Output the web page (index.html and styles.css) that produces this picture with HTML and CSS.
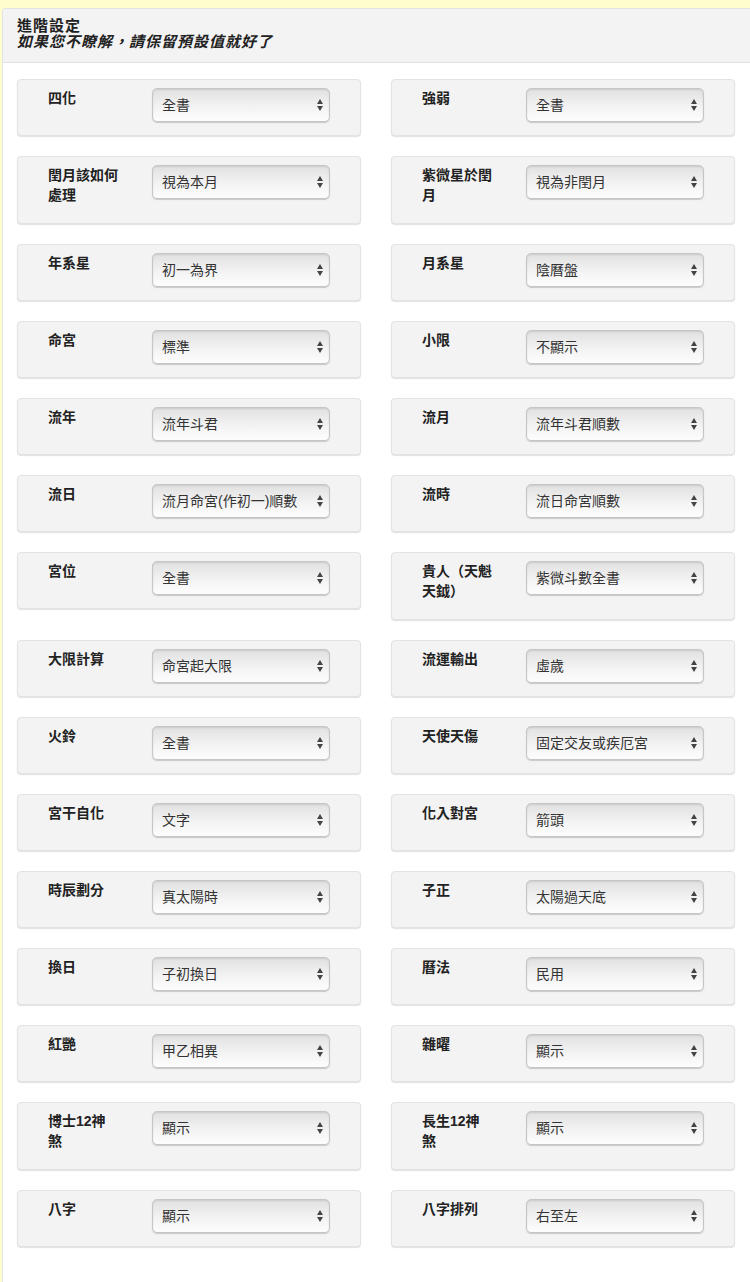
FILE: index.html
```html
<!DOCTYPE html>
<html lang="zh-Hant">
<head>
  <meta charset="UTF-8">
  <meta name="viewport" content="width=device-width, initial-scale=1.0">
  <title>進階設定</title>
  <link rel="stylesheet" href="styles.css">
</head>
<body>
  <div class="panel">
    <div class="panel-head">
      <h2>進階設定</h2>
      <p>如果您不瞭解，請保留預設值就好了</p>
    </div>
    <div class="panel-body">
      <div class="settings" id="settings"></div>
    </div>
  </div>

  <script>
    // label / current value pairs, filled two per row
    const options = [
      ['四化', '全書'], ['強弱', '全書'],
      ['閏月該如何處理', '視為本月'], ['紫微星於閏月', '視為非閏月'],
      ['年系星', '初一為界'], ['月系星', '陰曆盤'],
      ['命宮', '標準'], ['小限', '不顯示'],
      ['流年', '流年斗君'], ['流月', '流年斗君順數'],
      ['流日', '流月命宮(作初一)順數'], ['流時', '流日命宮順數'],
      ['宮位', '全書'], ['貴人（天魁天鉞）', '紫微斗數全書'],
      ['大限計算', '命宮起大限'], ['流運輸出', '虛歲'],
      ['火鈴', '全書'], ['天使天傷', '固定交友或疾厄宮'],
      ['宮干自化', '文字'], ['化入對宮', '箭頭'],
      ['時辰劃分', '真太陽時'], ['子正', '太陽過天底'],
      ['換日', '子初換日'], ['曆法', '民用'],
      ['紅艷', '甲乙相異'], ['雜曜', '顯示'],
      ['博士12神煞', '顯示'], ['長生12神煞', '顯示'],
      ['八字', '顯示'], ['八字排列', '右至左']
    ];

    const arrows = '<svg class="arrows" viewBox="0 0 6 12"><path d="M0 5L3 0L6 5Z"/><path d="M0 7L6 7L3 12Z"/></svg>';

    document.getElementById('settings').innerHTML = options.map(([label, value]) => `
      <div class="field">
        <label class="field-label">${label}</label>
        <span class="picker">
          <select><option>${value}</option></select>
          ${arrows}
        </span>
      </div>`).join('');
  </script>
</body>
</html>
```

FILE: styles.css
```css
html {
  overflow: hidden;
}
body {
  margin: 8px 0 0 2px;
  background: #fffdcd;
  font-family: "Liberation Sans", "Noto Sans CJK TC", sans-serif;
  color: #333;
}
.panel {
  background: #fff;
  border: 1px solid #e2e2e2;
  border-right: none;
  border-bottom: none;
  border-top-left-radius: 4px;
  min-height: 1300px;
}
.panel-head {
  background: #f3f3f3;
  border-bottom: 1px solid #e2e2e2;
  border-top-left-radius: 4px;
  padding: 9px 14px 12px;
}
.panel-head h2,
.panel-head p {
  margin: 0;
  font-size: 15px;
  letter-spacing: 1px;
  line-height: 16px;
  font-weight: bold;
  color: #222;
}
.panel-head p {
  font-style: italic;
}
.panel-body {
  padding: 16px 14px 40px;
}
.settings {
  display: grid;
  grid-template-columns: 344px 344px;
  column-gap: 30px;
  row-gap: 20px;
  align-items: start;
}
.field {
  display: flex;
  align-items: flex-start;
  gap: 34px;
  padding: 8px 30px 13px;
  background: #f3f3f3;
  border: 1px solid #e3e3e3;
  border-radius: 4px;
  box-shadow: 0 1px 1px rgba(0,0,0,0.12);
}
.field-label {
  flex: none;
  width: 70px;
  padding-bottom: 5px;
  font-size: 14px;
  line-height: 20px;
  font-weight: bold;
  color: #222;
}
.picker {
  position: relative;
  flex: none;
  width: 178px;
}
.picker select {
  display: block;
  width: 100%;
  height: 34px;
  margin: 0;
  padding: 0 24px 0 9px;
  -webkit-appearance: none;
  appearance: none;
  border: 1px solid #c6c6c6;
  border-radius: 5px;
  background: linear-gradient(#e1e1e1, #f4f4f4 60%, #fdfdfd);
  box-shadow: inset 0 1px 2px rgba(0,0,0,0.1), 0 1px 1px rgba(0,0,0,0.18);
  font-family: "Liberation Sans", "Noto Sans CJK TC", sans-serif;
  font-size: 14px;
  color: #333;
}
.picker .arrows {
  position: absolute;
  right: 7px;
  top: 11px;
  width: 6px;
  height: 12px;
  fill: #444;
  pointer-events: none;
}
```
